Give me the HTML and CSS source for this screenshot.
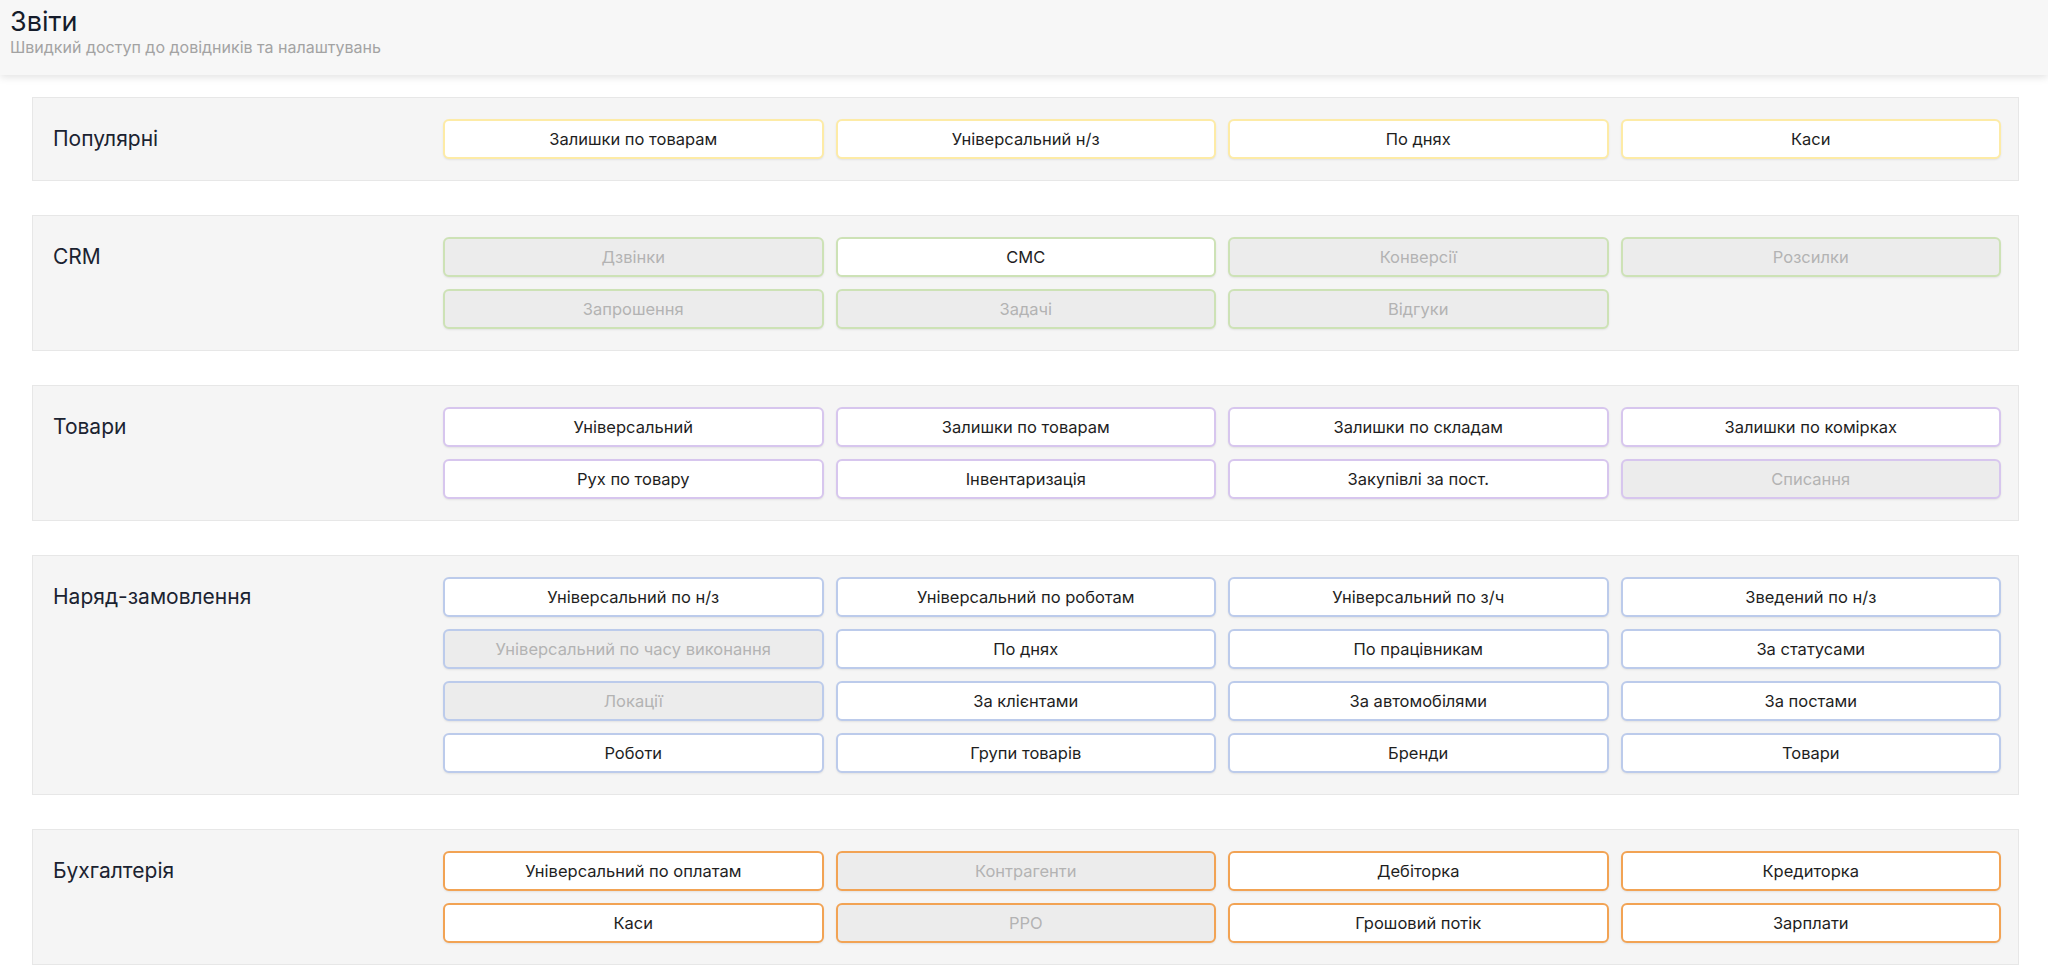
FILE: index.html
```html
<!DOCTYPE html>
<html lang="uk">
<head>
<meta charset="utf-8">
<title>Звіти</title>
<link rel="stylesheet" href="styles.css">
</head>
<body>
<header class="page-header">
  <h1 class="page-title">Звіти</h1>
  <div class="page-subtitle">Швидкий доступ до довідників та налаштувань</div>
</header>
<main class="content">
  <section class="group group-yellow">
    <div class="group-label">Популярні</div>
    <div class="group-buttons">
      <button class="btn">Залишки по товарам</button>
      <button class="btn">Універсальний н/з</button>
      <button class="btn">По днях</button>
      <button class="btn">Каси</button>
    </div>
  </section>
  <section class="group group-green">
    <div class="group-label">CRM</div>
    <div class="group-buttons">
      <button class="btn disabled">Дзвінки</button>
      <button class="btn">СМС</button>
      <button class="btn disabled">Конверсії</button>
      <button class="btn disabled">Розсилки</button>
      <button class="btn disabled">Запрошення</button>
      <button class="btn disabled">Задачі</button>
      <button class="btn disabled">Відгуки</button>
    </div>
  </section>
  <section class="group group-purple">
    <div class="group-label">Товари</div>
    <div class="group-buttons">
      <button class="btn">Універсальний</button>
      <button class="btn">Залишки по товарам</button>
      <button class="btn">Залишки по складам</button>
      <button class="btn">Залишки по комірках</button>
      <button class="btn">Рух по товару</button>
      <button class="btn">Інвентаризація</button>
      <button class="btn">Закупівлі за пост.</button>
      <button class="btn disabled">Списання</button>
    </div>
  </section>
  <section class="group group-blue">
    <div class="group-label">Наряд-замовлення</div>
    <div class="group-buttons">
      <button class="btn">Універсальний по н/з</button>
      <button class="btn">Універсальний по роботам</button>
      <button class="btn">Універсальний по з/ч</button>
      <button class="btn">Зведений по н/з</button>
      <button class="btn disabled">Універсальний по часу виконання</button>
      <button class="btn">По днях</button>
      <button class="btn">По працівникам</button>
      <button class="btn">За статусами</button>
      <button class="btn disabled">Локації</button>
      <button class="btn">За клієнтами</button>
      <button class="btn">За автомобілями</button>
      <button class="btn">За постами</button>
      <button class="btn">Роботи</button>
      <button class="btn">Групи товарів</button>
      <button class="btn">Бренди</button>
      <button class="btn">Товари</button>
    </div>
  </section>
  <section class="group group-orange">
    <div class="group-label">Бухгалтерія</div>
    <div class="group-buttons">
      <button class="btn">Універсальний по оплатам</button>
      <button class="btn disabled">Контрагенти</button>
      <button class="btn">Дебіторка</button>
      <button class="btn">Кредиторка</button>
      <button class="btn">Каси</button>
      <button class="btn disabled">РРО</button>
      <button class="btn">Грошовий потік</button>
      <button class="btn">Зарплати</button>
    </div>
  </section>
  <section class="group group-gray"></section>
</main>
</body>
</html>
```
FILE: styles.css
```css
* { box-sizing: border-box; }
html, body { margin: 0; padding: 0; }
body {
  background: #ffffff;
  font-family: Inter, "Noto Sans", "Liberation Sans", sans-serif;
  color: #1b2331;
  overflow: hidden;
  height: 972px;
}
.page-header {
  height: 75px;
  background: #f7f7f7;
  padding: 6px 10px 0 10px;
  box-shadow: 0 2px 8px rgba(0, 0, 0, 0.12);
  position: relative;
  z-index: 1;
}
.page-title {
  margin: 0;
  font-size: 27px;
  font-weight: 400;
  line-height: 32px;
  color: #151c2b;
}
.page-subtitle {
  font-size: 16px;
  line-height: 18px;
  color: #a3a3a3;
}
.content {
  padding: 22px 29px 0 32px;
  display: flex;
  flex-direction: column;
  gap: 34px;
}
.group {
  display: grid;
  grid-template-columns: 390px 1fr;
  padding: 21px 17px 21px 20px;
  background: #f5f5f5;
  border: 1px solid #e7e7e7;
}
.group-gray { min-height: 60px; }
.group-label {
  font-size: 21px;
  line-height: 40px;
  color: #1b2331;
  font-weight: 400;
}
.group-buttons {
  display: grid;
  grid-template-columns: repeat(4, 1fr);
  gap: 12px;
}
.btn {
  height: 40px;
  font-family: Inter, "Noto Sans", "Liberation Sans", sans-serif;
  font-size: 16.5px;
  color: #1e1e1e;
  background: #ffffff;
  border: 2px solid #ccc;
  border-radius: 6px;
  box-shadow: 0 1px 2px rgba(0, 0, 0, 0.08);
  padding: 0 8px;
  cursor: pointer;
}
.btn.disabled {
  background: #ececec;
  color: #b3b3b3;
}
.group-yellow .btn { border-color: #fdeba6; }
.group-green .btn { border-color: #cde2b6; }
.group-purple .btn { border-color: #d7c6ee; }
.group-blue .btn { border-color: #bccbeb; }
.group-orange .btn { border-color: #f2a354; }
```
